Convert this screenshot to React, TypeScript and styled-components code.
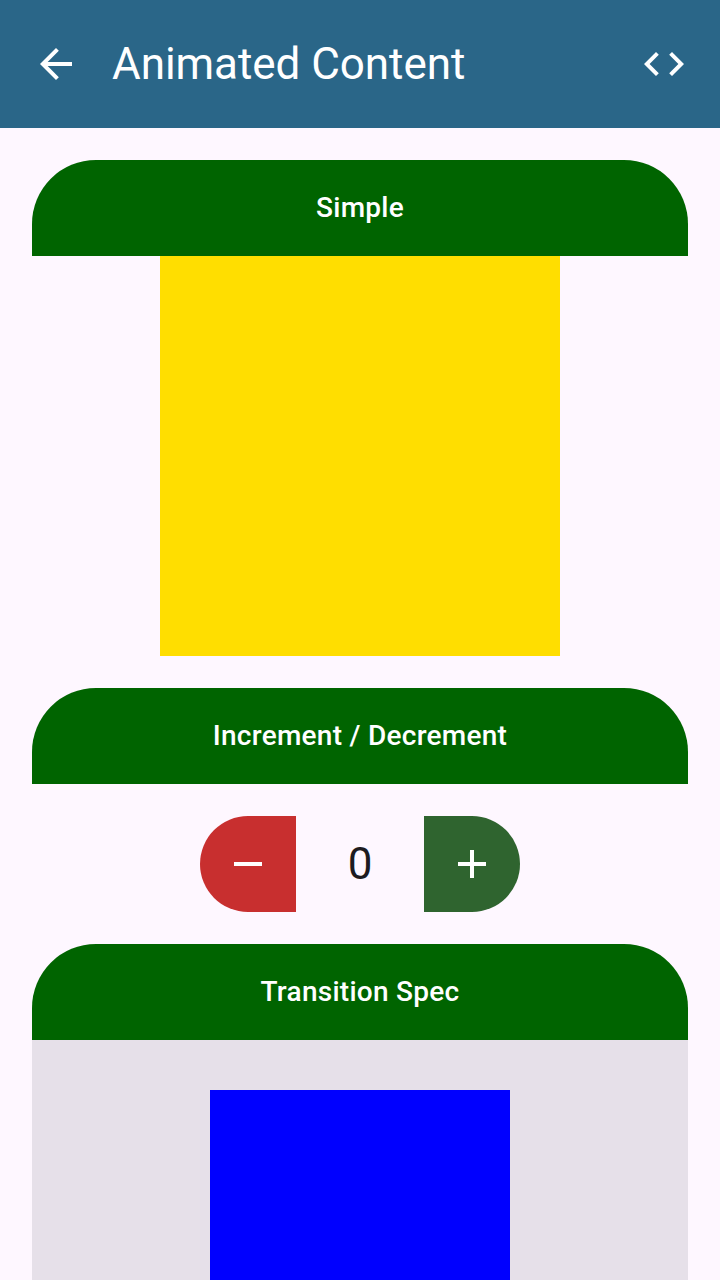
import React from "react";
import styled, { createGlobalStyle } from "styled-components";

const GlobalStyle = createGlobalStyle`
  * { box-sizing: border-box; }
  body { margin: 0; background: #fef7ff; font-family: Roboto, sans-serif; }
`;

const Screen = styled.div`
  display: flex;
  flex-direction: column;
  height: 1280px;
  overflow: hidden;
  background: #fef7ff;
`;

const AppBar = styled.header`
  display: flex;
  align-items: center;
  flex: none;
  height: 128px;
  padding: 0 32px;
  background: #2a6688;
  color: #fff;
`;

const Title = styled.h1`
  flex: 1;
  margin: 0 0 0 32px;
  font-size: 44px;
  font-weight: 400;
  line-height: 56px;
  letter-spacing: -0.05px;
`;

const IconButton = styled.button`
  display: flex;
  padding: 0;
  border: 0;
  background: none;
  color: inherit;
`;

const Content = styled.main`
  display: flex;
  flex-direction: column;
  gap: 32px;
  padding: 32px 32px 0;
`;

const Section = styled.section`
  display: flex;
  flex-direction: column;
  align-items: center;
`;

const SectionButton = styled.button`
  display: flex;
  align-items: center;
  justify-content: center;
  width: 100%;
  height: 96px;
  padding: 0;
  border: 0;
  border-radius: 64px 64px 0 0;
  background: #006400;
  color: #fff;
  font: 500 28px/40px Roboto, sans-serif;
  letter-spacing: 0.27px;
`;

const Square = styled.div<{ $size: number; $color: string }>`
  flex: none;
  width: ${(p) => p.$size}px;
  height: ${(p) => p.$size}px;
  background: ${(p) => p.$color};
`;

const Counter = styled.div`
  display: flex;
  justify-content: center;
`;

const StepButton = styled.button<{ $side: "left" | "right" }>`
  display: flex;
  align-items: center;
  justify-content: center;
  width: 96px;
  height: 96px;
  padding: 0;
  border: 0;
  border-radius: ${(p) => (p.$side === "left" ? "48px 0 0 48px" : "0 48px 48px 0")};
  background: ${(p) => (p.$side === "left" ? "#c82f2f" : "#2f642f")};
  color: #fff;
`;

const Count = styled.output`
  width: 128px;
  color: #1d1b20;
  font-size: 44px;
  line-height: 96px;
  text-align: center;
`;

const Stage = styled.div`
  display: flex;
  justify-content: center;
  width: 100%;
  height: 400px;
  padding-top: 50px;
  background: #e6e0e9;
`;

const Icon = ({ d }: { d: string }) => (
  <svg width="48" height="48" viewBox="0 0 24 24" fill="currentColor">
    <path d={d} />
  </svg>
);

export default function App() {
  return (
    <Screen>
      <GlobalStyle />
      <AppBar>
        <IconButton aria-label="Back">
          <Icon d="M20 11H7.83l5.59-5.59L12 4l-8 8 8 8 1.41-1.41L7.83 13H20v-2z" />
        </IconButton>
        <Title>Animated Content</Title>
        <IconButton aria-label="View code">
          <Icon d="M9.4 16.6 4.8 12l4.6-4.6L8 6l-6 6 6 6 1.4-1.4zm5.2 0 4.6-4.6-4.6-4.6L16 6l6 6-6 6-1.4-1.4z" />
        </IconButton>
      </AppBar>
      <Content>
        <Section>
          <SectionButton>Simple</SectionButton>
          <Square $size={400} $color="#ffde00" />
        </Section>
        <SectionButton>Increment / Decrement</SectionButton>
        <Counter>
          <StepButton $side="left" aria-label="Decrease">
            <Icon d="M19 13H5v-2h14v2z" />
          </StepButton>
          <Count>0</Count>
          <StepButton $side="right" aria-label="Increase">
            <Icon d="M19 13h-6v6h-2v-6H5v-2h6V5h2v6h6v2z" />
          </StepButton>
        </Counter>
        <Section>
          <SectionButton>Transition Spec</SectionButton>
          <Stage>
            <Square $size={300} $color="#0000ff" />
          </Stage>
        </Section>
      </Content>
    </Screen>
  );
}
